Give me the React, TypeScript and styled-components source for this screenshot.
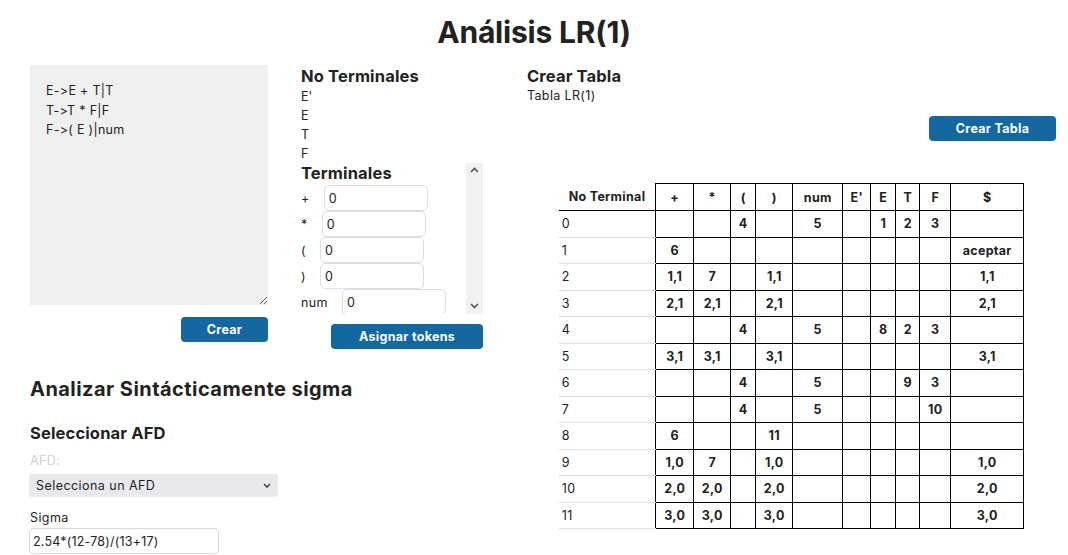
import React from "react";
import styled, { createGlobalStyle } from "styled-components";

const FONT = `"Inter", "Open Sans", "DejaVu Sans", sans-serif`;

const GlobalStyle = createGlobalStyle`
  html, body { margin: 0; padding: 0; background: #fff; }
  body { font-family: ${FONT}; font-size: 13px; color: #212121; }
  * { box-sizing: border-box; font-feature-settings: "calt" 0, "liga" 0; font-variant-ligatures: none; }
`;

const Page = styled.div`
  width: 1068px;
`;

const Title = styled.h1`
  margin: 0;
  height: 65px;
  padding-top: 17px;
  font-size: 30px;
  line-height: 30px;
  font-weight: 700;
  text-align: center;
  color: #222;
  letter-spacing: -0.2px;
`;

const Main = styled.div`
  display: flex;
  align-items: flex-start;
  padding: 0 12px 0 30px;
`;

const LeftArea = styled.div`
  width: 453px;
  flex: none;
`;

const TopRow = styled.div`
  display: flex;
  gap: 33px;
  align-items: flex-start;
`;

const GrammarCol = styled.div`
  width: 238px;
  display: flex;
  flex-direction: column;
  align-items: flex-end;
`;

const GrammarBox = styled.textarea`
  width: 238px;
  height: 240px;
  border: none;
  background: #efefef;
  padding: 16px 16px;
  font-family: ${FONT};
  font-size: 12.5px;
  letter-spacing: 0.3px;
  line-height: 19.5px;
  color: #222;
  resize: both;
  outline: none;
`;

const Button = styled.button<{ $w: number; $mt: number }>`
  width: ${(p) => p.$w}px;
  height: 25px;
  margin-top: ${(p) => p.$mt}px;
  border: none;
  border-radius: 4px;
  background: #1467a1;
  color: #fff;
  font-family: ${FONT};
  font-size: 12.5px;
  font-weight: 700;
  letter-spacing: 0.3px;
  padding: 0;
  cursor: pointer;
`;

const TokensCol = styled.div`
  width: 182px;
  display: flex;
  flex-direction: column;
  align-items: flex-end;
`;

const SubHeading = styled.h3<{ $mt?: number }>`
  margin: ${(p) => p.$mt ?? 0}px 0 0 0;
  align-self: stretch;
  font-size: 16.5px;
  line-height: 21px;
  font-weight: 700;
  letter-spacing: 0.15px;
  color: #222;
`;

const SymbolList = styled.div`
  align-self: stretch;
  display: flex;
  flex-direction: column;
`;

const SymbolLine = styled.div`
  height: 19px;
  line-height: 19px;
  font-size: 12.5px;
`;

const ScrollBox = styled.div`
  align-self: stretch;
  height: 151px;
  display: flex;
`;

const ScrollContent = styled.div`
  flex: 1;
  overflow: hidden;
`;

const FakeScrollbar = styled.div`
  width: 17px;
  flex: none;
  background: #f1f1f1;
  display: flex;
  flex-direction: column;
  justify-content: space-between;
  align-items: center;
  padding: 4px 0 5px;
`;

const TokenRow = styled.div`
  display: flex;
  align-items: center;
  height: 26px;
`;

const TokenLabel = styled.span`
  font-size: 12.5px;
  letter-spacing: 0.4px;
  margin-right: 14px;
`;

const TokenInput = styled.input`
  width: 104px;
  height: 26px;
  border: 1px solid #dcdcdc;
  border-radius: 5px;
  padding: 0 4px;
  font-family: ${FONT};
  font-size: 12.5px;
  color: #222;
  background: #fff;
  outline: none;
`;

const TokenRows = styled.div`
  margin-top: 1px;
`;

const Section = styled.div`
  display: flex;
  flex-direction: column;
`;

const BigHeading = styled.h2`
  margin: 28px 0 0 0;
  font-size: 20px;
  line-height: 24px;
  font-weight: 700;
  letter-spacing: 0.45px;
  color: #222;
`;

const FieldLabel = styled.label<{ $muted?: boolean; $mt: number }>`
  margin-top: ${(p) => p.$mt}px;
  font-size: 12.5px;
  line-height: 16px;
  letter-spacing: 0.4px;
  color: ${(p) => (p.$muted ? "#cfcfcf" : "#222")};
`;

const SelectWrap = styled.div`
  position: relative;
  margin: 5px 0 0 -1px;
  width: 249px;
  height: 23px;
`;

const Select = styled.select`
  appearance: none;
  width: 100%;
  height: 100%;
  border: none;
  border-radius: 3px;
  background: #e9e9ed;
  padding: 0 20px 0 7px;
  font-family: ${FONT};
  font-size: 12.5px;
  letter-spacing: 0.45px;
  color: #222;
  outline: none;
`;

const Chevron = styled.svg`
  position: absolute;
  right: 7px;
  top: 9px;
  pointer-events: none;
`;

const SigmaInput = styled.input`
  margin: 2px 0 0 -1px;
  width: 190px;
  height: 26px;
  border: 1px solid #d9d9d9;
  border-radius: 4px;
  padding: 0 3px;
  font-family: ${FONT};
  font-size: 12.5px;
  letter-spacing: 0.2px;
  color: #222;
  outline: none;
`;

const RightArea = styled.div`
  flex: 1;
  margin-left: 44px;
  display: flex;
  flex-direction: column;
`;

const PlainText = styled.div`
  margin-top: 1px;
  font-size: 12.5px;
  line-height: 16px;
  letter-spacing: 0.35px;
`;

const RightButtonRow = styled.div`
  display: flex;
  justify-content: flex-end;
`;

const Table = styled.table`
  margin: 42px auto 0;
  border-collapse: collapse;
  table-layout: fixed;
  width: 465px;
  font-size: 12.5px;
  letter-spacing: 0.3px;
`;

const Col = styled.col<{ $w: number }>`
  width: ${(p) => p.$w}px;
`;

const Th = styled.th<{ $first?: boolean }>`
  height: 27px;
  padding: 0;
  font-weight: 700;
  text-align: center;
  border: 1px solid #000;
  ${(p) =>
    p.$first &&
    `border-top: none; border-left: none; border-bottom: 1px solid #000;`}
`;

const Td = styled.td`
  height: 26.5px;
  padding: 0;
  font-weight: 700;
  text-align: center;
  border: 1px solid #000;
`;

const RowHead = styled.td`
  height: 26.5px;
  padding: 0 0 0 3px;
  font-weight: 400;
  text-align: left;
  border: none;
  border-bottom: 1px solid #dedede;
  border-right: 1px solid #000;
`;

const headers = ["+", "*", "(", ")", "num", "E'", "E", "T", "F", "$"];
const widths = [97, 38, 37, 25, 37, 50, 28, 25, 24, 31, 73];

const rows: string[][] = [
  ["", "", "4", "", "5", "", "1", "2", "3", ""],
  ["6", "", "", "", "", "", "", "", "", "aceptar"],
  ["1,1", "7", "", "1,1", "", "", "", "", "", "1,1"],
  ["2,1", "2,1", "", "2,1", "", "", "", "", "", "2,1"],
  ["", "", "4", "", "5", "", "8", "2", "3", ""],
  ["3,1", "3,1", "", "3,1", "", "", "", "", "", "3,1"],
  ["", "", "4", "", "5", "", "", "9", "3", ""],
  ["", "", "4", "", "5", "", "", "", "10", ""],
  ["6", "", "", "11", "", "", "", "", "", ""],
  ["1,0", "7", "", "1,0", "", "", "", "", "", "1,0"],
  ["2,0", "2,0", "", "2,0", "", "", "", "", "", "2,0"],
  ["3,0", "3,0", "", "3,0", "", "", "", "", "", "3,0"],
];

const tokens = ["+", "*", "(", ")", "num"];

export default function App() {
  return (
    <Page>
      <GlobalStyle />
      <Title>Análisis LR(1)</Title>
      <Main>
        <LeftArea>
          <TopRow>
            <GrammarCol>
              <GrammarBox
                defaultValue={"E->E + T|T\nT->T * F|F\nF->( E )|num"}
                spellCheck={false}
              />
              <Button $w={87} $mt={12}>Crear</Button>
            </GrammarCol>
            <TokensCol>
              <SubHeading $mt={1}>No Terminales</SubHeading>
              <SymbolList>
                {["E'", "E", "T", "F"].map((s) => (
                  <SymbolLine key={s}>{s}</SymbolLine>
                ))}
              </SymbolList>
              <ScrollBox>
                <ScrollContent>
                  <SubHeading>Terminales</SubHeading>
                  <TokenRows>
                    {tokens.map((t) => (
                      <TokenRow key={t}>
                        <TokenLabel>{t}</TokenLabel>
                        <TokenInput defaultValue="0" />
                      </TokenRow>
                    ))}
                  </TokenRows>
                </ScrollContent>
                <FakeScrollbar>
                  <svg width="9" height="6" viewBox="0 0 9 6">
                    <path d="M1 5 L4.5 1.5 L8 5" fill="none" stroke="#505050" strokeWidth="1.6" />
                  </svg>
                  <svg width="9" height="6" viewBox="0 0 9 6">
                    <path d="M1 1 L4.5 4.5 L8 1" fill="none" stroke="#505050" strokeWidth="1.6" />
                  </svg>
                </FakeScrollbar>
              </ScrollBox>
              <Button $w={152} $mt={10}>Asignar tokens</Button>
            </TokensCol>
          </TopRow>
          <Section>
            <BigHeading>Analizar Sintácticamente sigma</BigHeading>
            <SubHeading $mt={22}>Seleccionar AFD</SubHeading>
            <FieldLabel $muted $mt={9}>AFD:</FieldLabel>
            <SelectWrap>
              <Select defaultValue="">
                <option value="">Selecciona un AFD</option>
              </Select>
              <Chevron width="8" height="5" viewBox="0 0 8 5">
                <path d="M1 1 L4 4 L7 1" fill="none" stroke="#333" strokeWidth="1.3" />
              </Chevron>
            </SelectWrap>
            <FieldLabel $mt={13}>Sigma</FieldLabel>
            <SigmaInput defaultValue="2.54*(12-78)/(13+17)" />
          </Section>
        </LeftArea>
        <RightArea>
          <SubHeading $mt={1}>Crear Tabla</SubHeading>
          <PlainText>Tabla LR(1)</PlainText>
          <RightButtonRow>
            <Button $w={127} $mt={12}>Crear Tabla</Button>
          </RightButtonRow>
          <Table>
            <colgroup>
              {widths.map((w, i) => (
                <Col key={i} $w={w} />
              ))}
            </colgroup>
            <thead>
              <tr>
                <Th $first>No Terminal</Th>
                {headers.map((h) => (
                  <Th key={h}>{h}</Th>
                ))}
              </tr>
            </thead>
            <tbody>
              {rows.map((r, i) => (
                <tr key={i}>
                  <RowHead>{i}</RowHead>
                  {r.map((c, j) => (
                    <Td key={j}>{c}</Td>
                  ))}
                </tr>
              ))}
            </tbody>
          </Table>
        </RightArea>
      </Main>
    </Page>
  );
}
